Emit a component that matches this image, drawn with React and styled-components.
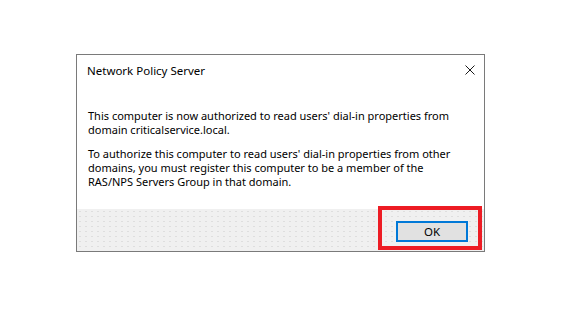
import React from 'react';
import styled, { createGlobalStyle } from 'styled-components';

const GlobalStyle = createGlobalStyle`
  html, body {
    margin: 0;
    padding: 0;
    background: #ffffff;
  }

  body {
    font-family: 'Noto Sans', 'Open Sans', sans-serif;
    color: #000000;
  }
`;

const App = () => {
  return (
    <Page>
      <GlobalStyle />

      <Dialog>
        <TitleBar>
          <Title>Network Policy Server</Title>
          <CloseButton aria-label="Close">
            <svg width="10" height="10" viewBox="0 0 10 10">
              <path d="M0.5 0.5 L9.5 9.5 M9.5 0.5 L0.5 9.5" stroke="#1a1a1a" strokeWidth="1" fill="none" />
            </svg>
          </CloseButton>
        </TitleBar>

        <Body>
          <Paragraph>
            This computer is now authorized to read users' dial-in properties from
            <br />
            domain criticalservice.local.
          </Paragraph>
          <Paragraph>
            To authorize this computer to read users' dial-in properties from other
            <br />
            domains, you must register this computer to be a member of the
            <br />
            RAS/NPS Servers Group in that domain.
          </Paragraph>
        </Body>

        <Footer>
          <Highlight>
            <OkButton>OK</OkButton>
          </Highlight>
        </Footer>
      </Dialog>
    </Page>
  );
};

const Page = styled.div`
  width: 562px;
  height: 312px;
  padding: 54px 0 0 76px;
  box-sizing: border-box;
`;

const Dialog = styled.div`
  width: 409px;
  height: 198px;
  box-sizing: border-box;
  border: 1px solid #7a7a7a;
  background: #ffffff;
  display: flex;
  flex-direction: column;
`;

const TitleBar = styled.div`
  height: 30px;
  flex-shrink: 0;
  display: flex;
  align-items: center;
  justify-content: space-between;
  padding: 0 9px 0 10px;
  box-sizing: border-box;
`;

const Title = styled.span`
  font-size: 11.5px;
  color: #000000;
  white-space: nowrap;
`;

const CloseButton = styled.span`
  display: flex;
  width: 10px;
  height: 10px;
`;

const Body = styled.div`
  flex: 1;
  padding: 24px 11px 0 11px;
  display: flex;
  flex-direction: column;
  gap: 10px;
`;

const Paragraph = styled.p`
  margin: 0;
  font-size: 11px;
  line-height: 14px;
  color: #000000;
  white-space: nowrap;
`;

const Footer = styled.div`
  height: 42px;
  flex-shrink: 0;
  display: flex;
  justify-content: flex-end;
  padding-right: 2px;
  background-color: #f0f0f0;
  background-image: radial-gradient(circle, #dedede 0.6px, transparent 0.9px);
  background-size: 6px 5px;
`;

const Highlight = styled.div`
  box-sizing: border-box;
  width: 104px;
  height: 44px;
  margin-top: -3px;
  border: 4px solid #ed1c24;
  padding: 9px 10px 0 14px;
`;

const OkButton = styled.button`
  box-sizing: border-box;
  width: 72px;
  height: 21px;
  margin: 0;
  padding: 0;
  border: 2px solid #0078d7;
  background: #e1e1e1;
  font-family: 'Noto Sans', 'Open Sans', sans-serif;
  font-size: 11.5px;
  line-height: 15px;
  color: #000000;
`;

export default App;
